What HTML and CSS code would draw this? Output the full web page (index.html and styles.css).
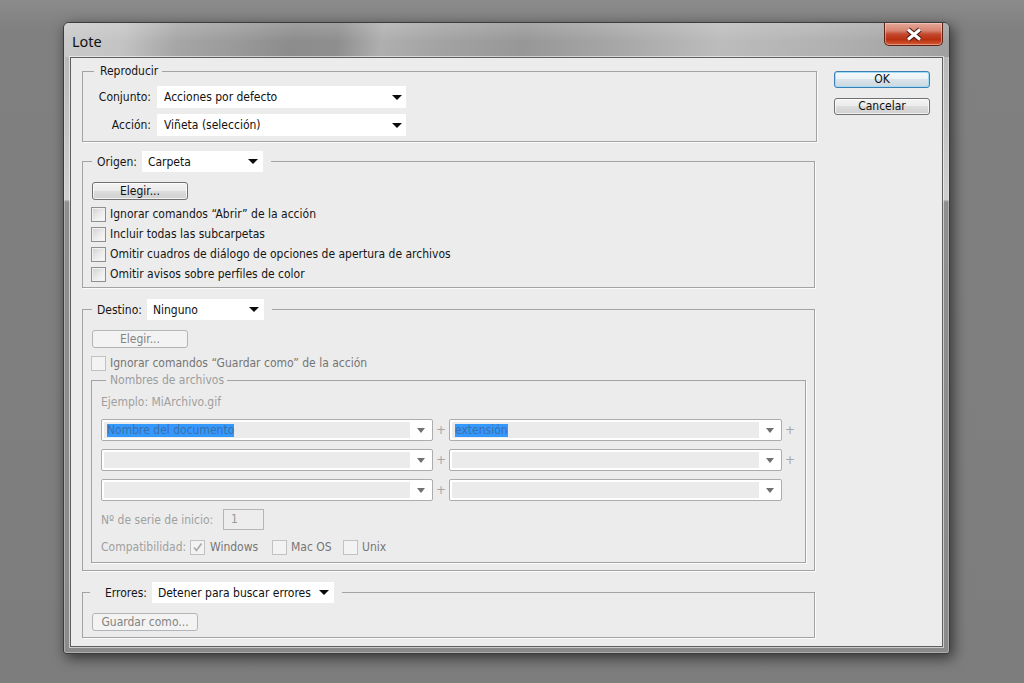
FILE: index.html
```html
<!DOCTYPE html>
<html lang="es">
<head>
<meta charset="utf-8">
<title>Lote</title>
<link rel="stylesheet" href="styles.css">
</head>
<body>
<div class="window">
  <div class="titlebar">
    <span class="title">Lote</span>
    <button class="close" aria-label="Cerrar">
      <svg width="22" height="15" viewBox="0 0 22 15"><path d="M5 2.5 L17 12.5 M17 2.5 L5 12.5" stroke="#4b1b12" stroke-width="5.2" fill="none"/><path d="M5 2.5 L17 12.5 M17 2.5 L5 12.5" stroke="#fff" stroke-width="3" fill="none"/></svg>
    </button>
  </div>
  <div class="client">
    <div class="main">
      <fieldset class="group g-play">
        <legend class="lg-text lg-play">Reproducir</legend>
        <div class="play-body">
          <span class="lbl">Conjunto:</span>
          <div class="dd dd-play"><span>Acciones por defecto</span><i class="arrow"></i></div>
          <span class="lbl">Acción:</span>
          <div class="dd dd-play"><span>Viñeta (selección)</span><i class="arrow"></i></div>
        </div>
      </fieldset>

      <fieldset class="group g-origin">
        <legend class="lg-ctl">
          <span>Origen:</span>
          <div class="dd dd-small dd-origin"><span>Carpeta</span><i class="arrow"></i></div>
        </legend>
        <div class="origin-body">
          <button class="btn btn-elegir">Elegir...</button>
          <div class="chk-row"><span class="box"></span><span>Ignorar comandos “Abrir” de la acción</span></div>
          <div class="chk-row"><span class="box"></span><span>Incluir todas las subcarpetas</span></div>
          <div class="chk-row"><span class="box"></span><span>Omitir cuadros de diálogo de opciones de apertura de archivos</span></div>
          <div class="chk-row"><span class="box"></span><span>Omitir avisos sobre perfiles de color</span></div>
        </div>
      </fieldset>

      <fieldset class="group g-dest">
        <legend class="lg-ctl">
          <span>Destino:</span>
          <div class="dd dd-small dd-dest"><span>Ninguno</span><i class="arrow"></i></div>
        </legend>
        <div class="dest-body">
          <button class="btn btn-elegir" disabled>Elegir...</button>
          <div class="chk-row dis-row"><span class="box box-dis"></span><span>Ignorar comandos “Guardar como” de la acción</span></div>
          <fieldset class="group g-names">
            <legend class="lg-text lg-names">Nombres de archivos</legend>
            <div class="names-body">
              <div class="example">Ejemplo: MiArchivo.gif</div>
              <div class="names-grid">
                <div class="cb"><div class="field"><span class="sel">Nombre del documento</span></div><div class="carrow"><i class="arrow arrow-dis"></i></div></div>
                <span class="plus">+</span>
                <div class="cb"><div class="field"><span class="sel">extensión</span></div><div class="carrow"><i class="arrow arrow-dis"></i></div></div>
                <span class="plus">+</span>

                <div class="cb"><div class="field"></div><div class="carrow"><i class="arrow arrow-dis"></i></div></div>
                <span class="plus">+</span>
                <div class="cb"><div class="field"></div><div class="carrow"><i class="arrow arrow-dis"></i></div></div>
                <span class="plus">+</span>

                <div class="cb"><div class="field"></div><div class="carrow"><i class="arrow arrow-dis"></i></div></div>
                <span class="plus">+</span>
                <div class="cb"><div class="field"></div><div class="carrow"><i class="arrow arrow-dis"></i></div></div>
                <span></span>
              </div>
              <div class="serie-row">
                <span class="serie-lbl">Nº de serie de inicio:</span>
                <span class="num">1</span>
              </div>
              <div class="compat-row">
                <span class="compat-lbl">Compatibilidad:</span>
                <span class="opt opt-win"><span class="box box-dis"><svg width="11" height="11" viewBox="0 0 11 11"><path d="M2 5.5 L4.5 8.5 L9.5 1.5" stroke="#a9a9a9" stroke-width="1.6" fill="none"/></svg></span><span>Windows</span></span>
                <span class="opt opt-mac"><span class="box box-dis"></span><span>Mac OS</span></span>
                <span class="opt"><span class="box box-dis"></span><span>Unix</span></span>
              </div>
            </div>
          </fieldset>
        </div>
      </fieldset>

      <fieldset class="group g-err">
        <legend class="lg-ctl lg-err">
          <span>Errores:</span>
          <div class="dd dd-small dd-err"><span>Detener para buscar errores</span><i class="arrow"></i></div>
        </legend>
        <div class="err-body">
          <button class="btn btn-save" disabled>Guardar como...</button>
        </div>
      </fieldset>
    </div>

    <div class="side">
      <button class="btn btn-side btn-default">OK</button>
      <button class="btn btn-side">Cancelar</button>
    </div>
  </div>
</div>
</body>
</html>
```

FILE: styles.css
```css
html, body {
  margin: 0;
  padding: 0;
}

body {
  width: 1024px;
  height: 683px;
  overflow: hidden;
  background: linear-gradient(to bottom, #8b8b8b 0, #808080 30px, #7d7d7d 100%);
  font-family: "DejaVu Sans Condensed", "DejaVu Sans", sans-serif;
  font-size: 12px;
  color: #151515;
}

.window {
  margin: 22px 0 0 63px;
  width: 887px;
  height: 632px;
  box-sizing: border-box;
  border: 1px solid #3c3c3c;
  border-radius: 6px 6px 3px 3px;
  background: linear-gradient(to bottom, #b4b4b4 0, #cfcfcf 28%, #8e8e8e 28.4%, #8a8a8a 100%);
  padding-bottom: 6px;
  box-shadow: 3px 4px 14px rgba(0, 0, 0, 0.6), inset 0 0 0 1px rgba(255, 255, 255, 0.3);
  display: flex;
  flex-direction: column;
}

.titlebar {
  height: 34px;
  display: flex;
  justify-content: space-between;
  align-items: flex-start;
  padding: 0 6px 0 8px;
  border-radius: 5px 5px 0 0;
  background:
    linear-gradient(to bottom, rgba(255, 255, 255, 0.16) 0, rgba(255, 255, 255, 0) 55%),
    linear-gradient(100deg, #cacaca 0%, #c3c3c3 7%, #a6a6a6 13%, #9b9b9b 19%, #8c8c8c 26%, #8e8e8e 31%, #afafaf 36%, #a2a2a2 43%, #979797 52%, #a6a6a6 62%, #bcbcbc 74%, #b2b2b2 85%, #a0a0a0 100%);
}

.title {
  font-family: "Noto Sans", "Open Sans", sans-serif;
  font-size: 14.5px;
  line-height: 18px;
  margin-top: 9px;
  color: #111;
}

.close {
  width: 59px;
  height: 23px;
  margin: 0;
  padding: 0;
  border: 1px solid #5e2218;
  border-top: none;
  border-radius: 0 0 5px 5px;
  background: linear-gradient(to bottom, #e6a99a 0, #d7836f 35%, #c44a30 50%, #b8300f 75%, #d55a36 100%);
  box-shadow: inset 0 0 0 1px rgba(255, 220, 210, 0.45);
  display: flex;
  align-items: center;
  justify-content: center;
}

.close svg {
  display: block;
}

.client {
  margin: 0 6px;
  flex: 1;
  box-sizing: border-box;
  border: 1px solid #5f5f5f;
  background: #ececec;
  padding: 6px 0 0 11px;
  display: flex;
  gap: 17px;
  box-shadow: 0 0 0 1px rgba(255, 255, 255, 0.55);
}

.main {
  width: 735px;
  display: flex;
  flex-direction: column;
}

.side {
  padding-top: 7px;
  display: flex;
  flex-direction: column;
  gap: 10px;
}

/* group boxes */
fieldset.group {
  margin: 0;
  padding: 0;
  min-width: 0;
  width: 733px;
  box-sizing: border-box;
  border: 1px solid #a3a3a3;
  box-shadow: 1px 1px 0 #fbfbfb;
}

fieldset.g-play { width: 735px; }
fieldset.g-origin { margin-top: 9px; }
fieldset.g-dest { margin-top: 11px; }
fieldset.g-err { margin-top: 11px; }
fieldset.g-names { width: 715px; }

legend {
  padding: 0;
}

.lg-text {
  line-height: 14px;
}

.lg-play {
  margin-left: 11px;
  padding: 0 4px 0 6px;
}

.lg-ctl {
  margin-left: 9px;
  padding: 0 8px 0 5px;
  display: flex;
  align-items: center;
  gap: 5px;
  height: 21px;
}

.lg-ctl.lg-err {
  margin-left: 7px;
  padding-left: 15px;
}

.lg-names {
  margin-left: 14px;
  padding: 0 3px 0 4px;
  color: #9d9d9d;
}

/* dropdowns */
.dd {
  display: flex;
  align-items: center;
  justify-content: space-between;
  background: #fff;
  box-sizing: border-box;
  height: 22px;
  padding: 0 4px 0 7px;
  color: #111;
}

.dd-play { width: 249px; }
.dd.dd-small { height: 21px; padding: 0 5px 0 6px; }
.dd-origin { width: 121px; }
.dd-dest { width: 117px; }
.dd-err { width: 182px; }

.arrow {
  display: block;
  width: 0;
  height: 0;
  border-left: 5px solid transparent;
  border-right: 5px solid transparent;
  border-top: 5px solid #0a0a0a;
}

.arrow.arrow-dis {
  border-left-width: 4.5px;
  border-right-width: 4.5px;
  border-top-color: #707070;
}

/* reproducir */
.play-body {
  padding: 8px 0 5px 8px;
  display: grid;
  grid-template-columns: 60px 249px;
  column-gap: 6px;
  row-gap: 6px;
  align-items: center;
}

.lbl {
  text-align: right;
}

/* buttons */
.btn {
  display: block;
  margin: 0;
  padding: 0;
  box-sizing: border-box;
  height: 18px;
  font-family: inherit;
  font-size: 12px;
  line-height: 16px;
  color: #111;
  border: 1px solid #707070;
  border-radius: 3px;
  background: linear-gradient(to bottom, #f3f3f3 0, #ebebeb 50%, #dddddd 50%, #cfcfcf 100%);
  box-shadow: inset 0 0 0 1px rgba(255, 255, 255, 0.75);
}

.btn:disabled {
  color: #838383;
  border-color: #b3b6b8;
  background: #f3f3f3;
  box-shadow: none;
}

.btn-elegir {
  width: 96px;
  margin-left: 1px;
}

.btn.btn-side {
  width: 96px;
  height: 17px;
  line-height: 15px;
}

.btn.btn-default {
  border-color: #3c7fb1;
  box-shadow: inset 0 0 0 1px #9fdcf8;
  background: linear-gradient(to bottom, #f4f8fa 0, #eaf2f6 50%, #dae4ea 50%, #cdd8de 100%);
}

.btn-save {
  width: 106px;
  margin-left: 1px;
}

/* checkboxes */
.chk-row {
  height: 20px;
  display: flex;
  align-items: center;
  gap: 4px;
}

.box {
  width: 15px;
  height: 15px;
  box-sizing: border-box;
  border: 1px solid #8e8f8f;
  background: linear-gradient(135deg, #cfcfcf 0, #ececec 55%, #fbfbfb 100%);
  box-shadow: inset 0 0 0 1px #f1f1f1;
  display: flex;
  align-items: center;
  justify-content: center;
  flex: none;
}

.box.box-dis {
  border-color: #c2c2c2;
  background: #f3f3f3;
  box-shadow: none;
}

.chk-row.dis-row {
  color: #757575;
  margin-top: 5px;
}

/* origen */
.origin-body {
  padding: 10px 0 3px 8px;
}

.origin-body .btn-elegir {
  margin-bottom: 4px;
}

/* destino */
.dest-body {
  padding: 10px 8px 7px 8px;
}

.names-body {
  padding: 8px 0 5px 9px;
  color: #a0a0a0;
}

.example {
  line-height: 14px;
}

.names-grid {
  margin-top: 10px;
  display: grid;
  grid-template-columns: 332px 16px 333px 16px;
  grid-auto-rows: 22px;
  row-gap: 8px;
  align-items: center;
}

.plus {
  text-align: center;
  color: #a6a6a6;
  font-family: "DejaVu Sans", sans-serif;
  font-size: 12px;
}

.cb {
  height: 22px;
  box-sizing: border-box;
  border: 1px solid #acacac;
  border-radius: 2px;
  background: #fff;
  padding: 2px 0 2px 2px;
  display: flex;
}

.cb .field {
  flex: 1;
  background: #ebebeb;
  display: flex;
  align-items: center;
  padding-left: 3px;
}

.cb .carrow {
  width: 22px;
  display: flex;
  align-items: center;
  justify-content: center;
}

.sel {
  background: #3399ff;
  color: #3f6fa6;
  line-height: 13px;
}

.serie-row {
  margin-top: 8px;
  display: flex;
  align-items: center;
  height: 21px;
}

.serie-lbl {
  width: 122px;
}

.num {
  width: 41px;
  height: 21px;
  box-sizing: border-box;
  border: 1px solid #b6b6b6;
  background: #ededed;
  padding-left: 7px;
  line-height: 19px;
  color: #999;
}

.compat-row {
  margin-top: 7px;
  height: 20px;
  display: flex;
  align-items: center;
}

.compat-lbl {
  width: 89px;
}

.opt {
  display: flex;
  align-items: center;
  gap: 4px;
  color: #767676;
}

.opt.opt-win { width: 82px; gap: 5px; }
.opt.opt-mac { width: 71px; }

/* errores */
.err-body {
  padding: 10px 0 6px 8px;
}
```
